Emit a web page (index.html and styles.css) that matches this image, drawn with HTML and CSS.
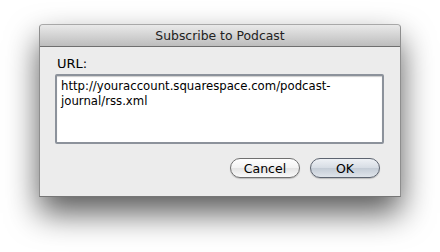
FILE: index.html
```html
<!DOCTYPE html>
<html lang="en">
<head>
    <meta charset="UTF-8">
    <title>Subscribe to Podcast</title>
    <link rel="stylesheet" href="styles.css">
</head>
<body>
    <div class="window">
        <div class="titlebar">Subscribe to Podcast</div>
        <div class="content">
            <label class="field-label">URL:</label>
            <div class="url-field">http://youraccount.squarespace.com/podcast-journal/rss.xml</div>
            <div class="buttons">
                <button class="btn">Cancel</button>
                <button class="btn btn-default">OK</button>
            </div>
        </div>
    </div>
</body>
</html>
```

FILE: styles.css
```css
html {
    height: 100%;
}
body {
    margin: 0;
    height: 100%;
    box-sizing: border-box;
    padding: 24px 0 0 39px;
    background: #ffffff;
    font-family: "DejaVu Sans", "Noto Sans", sans-serif;
    font-size: 12px;
    color: #000;
}
.window {
    width: 360px;
    height: 171px;
    border: 1px solid #8e8e8e;
    border-top-color: #a8a8a8;
    border-bottom-color: #767676;
    border-radius: 4px 4px 0 0;
    background: #ececec;
    box-shadow: 0 16px 32px rgba(0, 0, 0, 0.65);
    display: flex;
    flex-direction: column;
}
.titlebar {
    height: 21px;
    line-height: 21px;
    text-align: center;
    font-size: 12.4px;
    color: #222;
    background: linear-gradient(#e9e9e9, #bdbdbd);
    border-bottom: 1px solid #6f6f6f;
    border-radius: 4px 4px 0 0;
}
.content {
    padding: 9px 16px 0 15px;
}
.field-label {
    display: block;
    font-size: 13px;
    margin-left: 2px;
    height: 17px;
}
.url-field {
    margin-top: 1px;
    height: 60px;
    padding: 3px 4px;
    border: 2px solid #8c929b;
    border-radius: 2px;
    background: #fff;
    box-shadow: inset 0 1px 1px rgba(0, 0, 0, 0.2);
    font-size: 11.7px;
    line-height: 15px;
}
.buttons {
    display: flex;
    justify-content: flex-end;
    gap: 10px;
    margin-top: 14px;
    padding-right: 4px;
}
.btn {
    width: 70px;
    height: 20px;
    padding: 0;
    border: 1px solid #707070;
    border-radius: 10px;
    background: linear-gradient(#ffffff, #f2f2f2 50%, #e4e4e4 51%, #fafafa);
    box-shadow: 0 1px 1px rgba(0, 0, 0, 0.2);
    font-family: inherit;
    font-size: 12.5px;
    color: #000;
}
.btn-default {
    border-color: #5d6470;
    background: linear-gradient(#eef1f5, #d6dce4 50%, #c4ccd6 51%, #dfe4ea);
}
```
